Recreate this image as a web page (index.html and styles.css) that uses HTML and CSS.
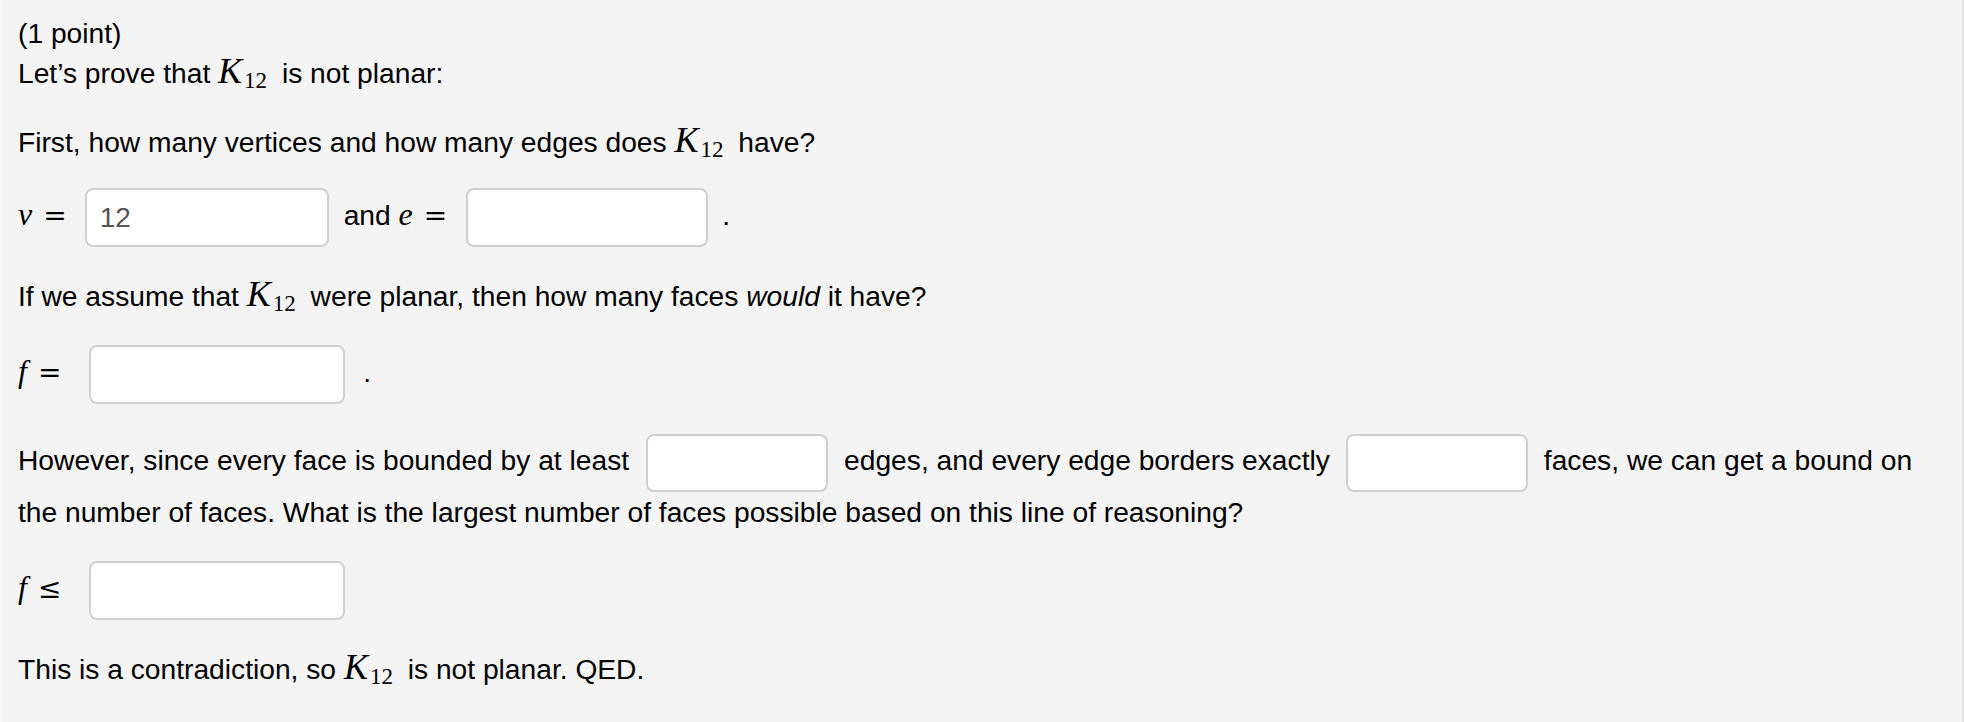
FILE: index.html
```html
<!DOCTYPE html>
<html>
<head>
<meta charset="utf-8">
<link rel="stylesheet" href="styles.css">
</head>
<body>
<div class="page">
  <div class="problem">
    <p class="para">(1 point)<br>Let’s prove that <span class="math"><span class="mi k">K</span><span class="sub">12</span></span> is not planar:</p>
    <p class="para gap">First, how many vertices and how many edges does <span class="math"><span class="mi k">K</span><span class="sub">12</span></span> have?</p>
    <p class="para gap-row row"><span class="math"><span class="mi">v</span><span class="mo">=</span></span><input class="ans w-v" type="text" value="12"><span class="txt">and <span class="math"><span class="mi">e</span><span class="mo">=</span></span></span><input class="ans w-e" type="text"><span class="dot">.</span></p>
    <p class="para gap">If we assume that <span class="math"><span class="mi k">K</span><span class="sub">12</span></span> were planar, then how many faces <em>would</em> it have?</p>
    <p class="para gap row"><span class="math"><span class="mi">f</span><span class="mo">=</span></span><input class="ans w-f" type="text"><span class="dot f-dot">.</span></p>
    <p class="para gap">However, since every face is bounded by at least<input class="ans w-s in-a" type="text">edges, and every edge borders exactly<input class="ans w-s in-b" type="text">faces, we can get a bound on the number of faces. What is the largest number of faces possible based on this line of reasoning?</p>
    <p class="para gap row"><span class="math"><span class="mi">f</span><span class="mo">≤</span></span><input class="ans w-f" type="text"></p>
    <p class="para gap">This is a contradiction, so <span class="math"><span class="mi k">K</span><span class="sub">12</span></span> is not planar. QED.</p>
  </div>
</div>
</body>
</html>
```

FILE: styles.css
```css
html, body {
  margin: 0;
  padding: 0;
  background: #f4f4f4;
}

.page {
  box-sizing: border-box;
  width: 1964px;
  min-height: 722px;
  background: #f4f4f4;
  border-right: 2px solid #e3e3e3;
  border-left: 3px solid #f8f8f8;
  font-family: "Liberation Sans", Arial, Helvetica, sans-serif;
  font-size: 28.2px;
  line-height: 39px;
  color: #000;
}

.problem {
  padding: 14px 25px 20px 15px;
}

.para {
  margin: 0;
}

.gap {
  margin-top: 29px;
}

.gap-row {
  margin-top: 26px;
}

.math {
  font-family: "Liberation Serif", "Times New Roman", serif;
  white-space: nowrap;
  line-height: 1;
}

.mi {
  font-style: italic;
  font-size: 32px;
  line-height: 1;
}

.k {
  font-size: 36px;
}

.sub {
  font-size: 23px;
  line-height: 1;
  position: relative;
  top: 5px;
  margin-left: 2px;
  margin-right: 7px;
}

.mo {
  font-family: "DejaVu Serif", serif;
  font-size: 28px;
  line-height: 1;
  margin-left: 11px;
}

.ans {
  box-sizing: border-box;
  height: 59px;
  border: 2px solid #cfcfcf;
  border-radius: 8px;
  background: #fff;
  font-family: "Liberation Sans", Arial, sans-serif;
  font-size: 28px;
  color: #555;
  padding: 0 13px;
  vertical-align: middle;
  outline: none;
  margin: 0;
}

.w-v {
  width: 244px;
  margin-left: 18px;
}

.w-e {
  width: 242px;
  margin-left: 19px;
}

.w-f {
  width: 256px;
  margin-left: 28px;
}

.w-s {
  width: 182px;
  height: 58px;
}

.in-a {
  margin: 1px 16px 1px 17px;
}

.in-b {
  margin: 1px 16px 1px 16px;
}

.txt {
  margin-left: 15px;
}

.dot {
  margin-left: 14px;
}

.f-dot {
  margin-left: 18px;
}
```
